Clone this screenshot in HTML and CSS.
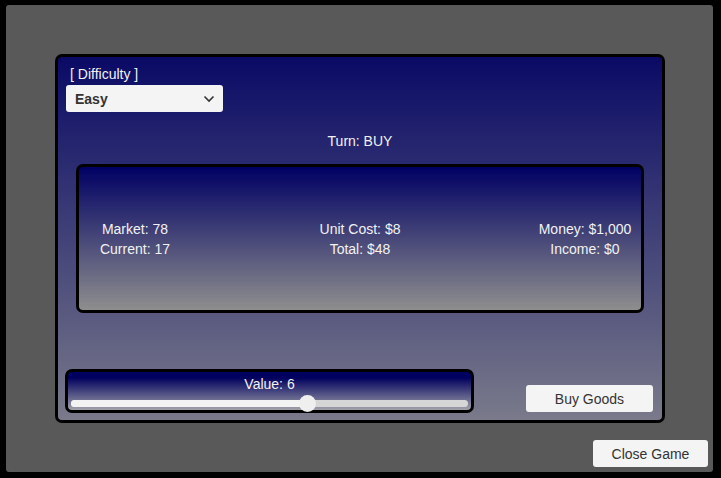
FILE: index.html
```html
<!DOCTYPE html>
<html>
<head>
<meta charset="utf-8">
<link rel="stylesheet" href="styles.css">
</head>
<body>
<div class="frame">
  <div class="panel">
    <div class="diff-label">[ Difficulty ]</div>
    <div class="dropdown">
      <span class="dd-text">Easy</span>
      <svg class="chev" width="12" height="8" viewBox="0 0 12 8"><polyline points="1.5,1.5 6,6 10.5,1.5" fill="none" stroke="#333" stroke-width="1.6"/></svg>
    </div>
    <div class="turn">Turn: BUY</div>
    <div class="stats">
      <div class="col"><div>Market: 78</div><div>Current: 17</div></div>
      <div class="col"><div>Unit Cost: $8</div><div>Total: $48</div></div>
      <div class="col"><div>Money: $1,000</div><div>Income: $0</div></div>
    </div>
    <div class="bottom-row">
      <div class="slider-panel">
        <div class="value">Value: 6</div>
        <div class="track">
          <div class="fill" style="width:59.7%"></div>
          <div class="handle" style="left:59.7%"></div>
        </div>
      </div>
      <button class="btn buy">Buy Goods</button>
    </div>
  </div>
  <button class="btn close">Close Game</button>
</div>
</body>
</html>
```
FILE: styles.css
```css
html, body {
  margin: 0;
  padding: 0;
  background: #000;
  width: 721px;
  height: 478px;
  overflow: hidden;
  font-family: "Liberation Sans", Arial, sans-serif;
}
.frame {
  margin: 5px 0 0 6px;
  width: 707px;
  height: 467px;
  box-sizing: border-box;
  background: #595959;
  border-radius: 3px;
  padding: 49px 5px 5px 49px;
  display: flex;
  flex-direction: column;
}
.panel {
  width: 610px;
  height: 369px;
  box-sizing: border-box;
  border: 3px solid #000;
  border-radius: 7px;
  background: linear-gradient(to bottom, #0a0a66, #7a7a8b);
  display: flex;
  flex-direction: column;
  color: #f2f2f2;
  font-size: 14px;
  line-height: 16px;
}
.diff-label {
  margin: 9px 0 0 12px;
}
.dropdown {
  margin: 3px 0 0 8px;
  width: 157px;
  height: 27px;
  box-sizing: border-box;
  background: #f4f4f4;
  border-radius: 3px;
  display: flex;
  align-items: center;
  justify-content: space-between;
  padding: 0 8px 0 9px;
}
.dd-text {
  color: #333;
  font-weight: bold;
  font-size: 14px;
}
.turn {
  margin-top: 21px;
  text-align: center;
}
.stats {
  margin: 15px 0 0 18px;
  width: 568px;
  height: 149px;
  box-sizing: border-box;
  border: 3px solid #000;
  border-radius: 7px;
  background: linear-gradient(to bottom, #000064, #8e8e8e);
  display: grid;
  grid-template-columns: 112px 1fr 112px;
  align-items: center;
  line-height: 20px;
}
.col {
  text-align: center;
  white-space: nowrap;
}
.bottom-row {
  margin-top: auto;
  padding: 0 9px 7px 7px;
  display: flex;
  justify-content: space-between;
  align-items: flex-end;
}
.slider-panel {
  width: 409px;
  height: 44px;
  box-sizing: border-box;
  border: 3px solid #000;
  border-radius: 7px;
  background: linear-gradient(to bottom, #00005e 15%, #a2a2aa);
  padding: 4px 3px 3px;
}
.value {
  text-align: center;
}
.track {
  position: relative;
  margin-top: 8px;
  height: 7px;
  border-radius: 4px;
  background: #d6d6d6;
}
.fill {
  height: 7px;
  border-radius: 4px;
  background: #f3f3f3;
}
.handle {
  position: absolute;
  top: -5px;
  width: 17px;
  height: 17px;
  margin-left: -9px;
  border-radius: 50%;
  background: #efefef;
}
.btn {
  font-family: "Liberation Sans", Arial, sans-serif;
  font-size: 14px;
  color: #333;
  background: #f4f4f4;
  border: none;
  border-radius: 3px;
  padding: 0;
  height: 27px;
}
.buy {
  width: 127px;
  margin-bottom: 1px;
}
.close {
  align-self: flex-end;
  margin-top: 17px;
  width: 115px;
}
```
